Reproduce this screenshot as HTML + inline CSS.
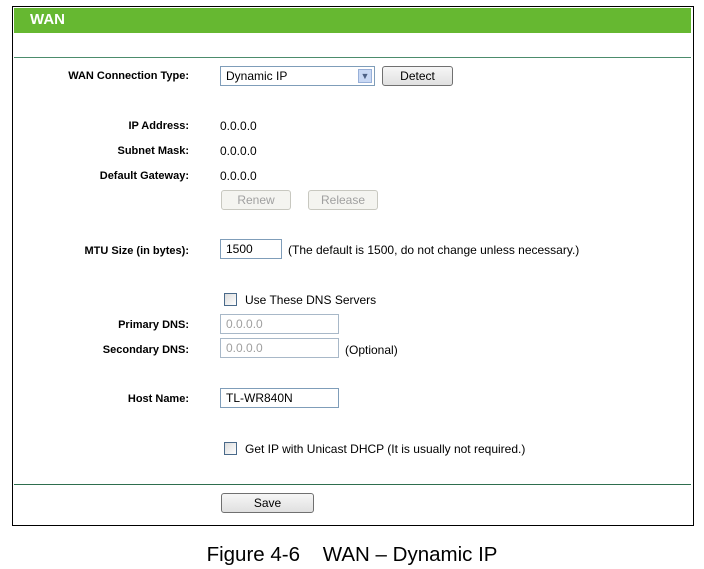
<!DOCTYPE html><html><head><style>
body{margin:0;width:704px;height:569px;background:#fff;position:relative;font-family:"Liberation Sans",Arial,sans-serif;font-size:12px;color:#000;overflow:hidden}
.a{position:absolute}
.frame{left:12px;top:6px;width:680px;height:518px;border:1px solid #000;background:#fff}
.hd{left:14px;top:8px;width:677px;height:25px;background:#66b831;color:#fff;font-weight:bold;font-size:15px;line-height:24px;padding-left:16px;box-sizing:border-box}
.ln{left:14px;width:677px;height:1px;background:#4c8c6c}
.lb{width:180px;left:9px;text-align:right;font-weight:bold;font-size:11px}
.v{left:220px}
.in{background:#fff;border:1px solid #7f9db9;box-sizing:border-box;height:20px;line-height:18px;padding-left:5px}
.btn{border:1px solid #707070;border-radius:3px;background:linear-gradient(#f6f6f6,#e0e0e0);box-sizing:border-box;text-align:center;height:20px;line-height:18px}
.dis{color:#a0a0a0;border-color:#c8c8c0;background:#f4f4f0}
.cb{width:13px;height:13px;border:1px solid #4a6a8a;box-sizing:border-box;background:linear-gradient(135deg,#dcdcdc,#fff)}
</style></head><body>
<div class="a frame"></div>
<div class="a hd">WAN</div>
<div class="a ln" style="top:57px"></div>
<div class="a lb" style="top:70px">WAN Connection Type:</div>
<div class="a in" style="left:220px;top:66px;width:155px;">Dynamic IP<span class="a" style="right:2px;top:2px;width:14px;height:14px;background:#c8d8f4;border:1px solid #98b0d8;box-sizing:border-box;font-size:9px;line-height:12px;text-align:center;color:#4d6185">&#9660;</span></div>
<div class="a btn" style="left:382px;top:66px;width:71px">Detect</div>
<div class="a lb" style="top:120px">IP Address:</div><div class="a v" style="top:119px">0.0.0.0</div>
<div class="a lb" style="top:145px">Subnet Mask:</div><div class="a v" style="top:144px">0.0.0.0</div>
<div class="a lb" style="top:170px">Default Gateway:</div><div class="a v" style="top:169px">0.0.0.0</div>
<div class="a btn dis" style="left:221px;top:190px;width:70px">Renew</div>
<div class="a btn dis" style="left:308px;top:190px;width:70px">Release</div>
<div class="a lb" style="top:245px">MTU Size (in bytes):</div>
<div class="a in" style="left:220px;top:239px;width:62px">1500</div>
<div class="a" style="left:288px;top:243px">(The default is 1500, do not change unless necessary.)</div>
<div class="a cb" style="left:224px;top:293px"></div>
<div class="a" style="left:245px;top:293px">Use These DNS Servers</div>
<div class="a lb" style="top:319px">Primary DNS:</div>
<div class="a in" style="left:220px;top:314px;width:119px;color:#a0a0a0;border-color:#a8b8c8">0.0.0.0</div>
<div class="a lb" style="top:344px">Secondary DNS:</div>
<div class="a in" style="left:220px;top:338px;width:119px;color:#a0a0a0;border-color:#a8b8c8">0.0.0.0</div>
<div class="a" style="left:345px;top:343px">(Optional)</div>
<div class="a lb" style="top:393px">Host Name:</div>
<div class="a in" style="left:220px;top:388px;width:119px">TL-WR840N</div>
<div class="a cb" style="left:224px;top:442px"></div>
<div class="a" style="left:245px;top:442px">Get IP with Unicast DHCP (It is usually not required.)</div>
<div class="a ln" style="top:484px;background:#2e6e4e"></div>
<div class="a btn" style="left:221px;top:493px;width:93px">Save</div>
<div class="a" style="left:0;width:704px;top:543px;text-align:center;font-size:20.5px">Figure 4-6&nbsp;&nbsp;&nbsp; WAN – Dynamic IP</div>
</body></html>
